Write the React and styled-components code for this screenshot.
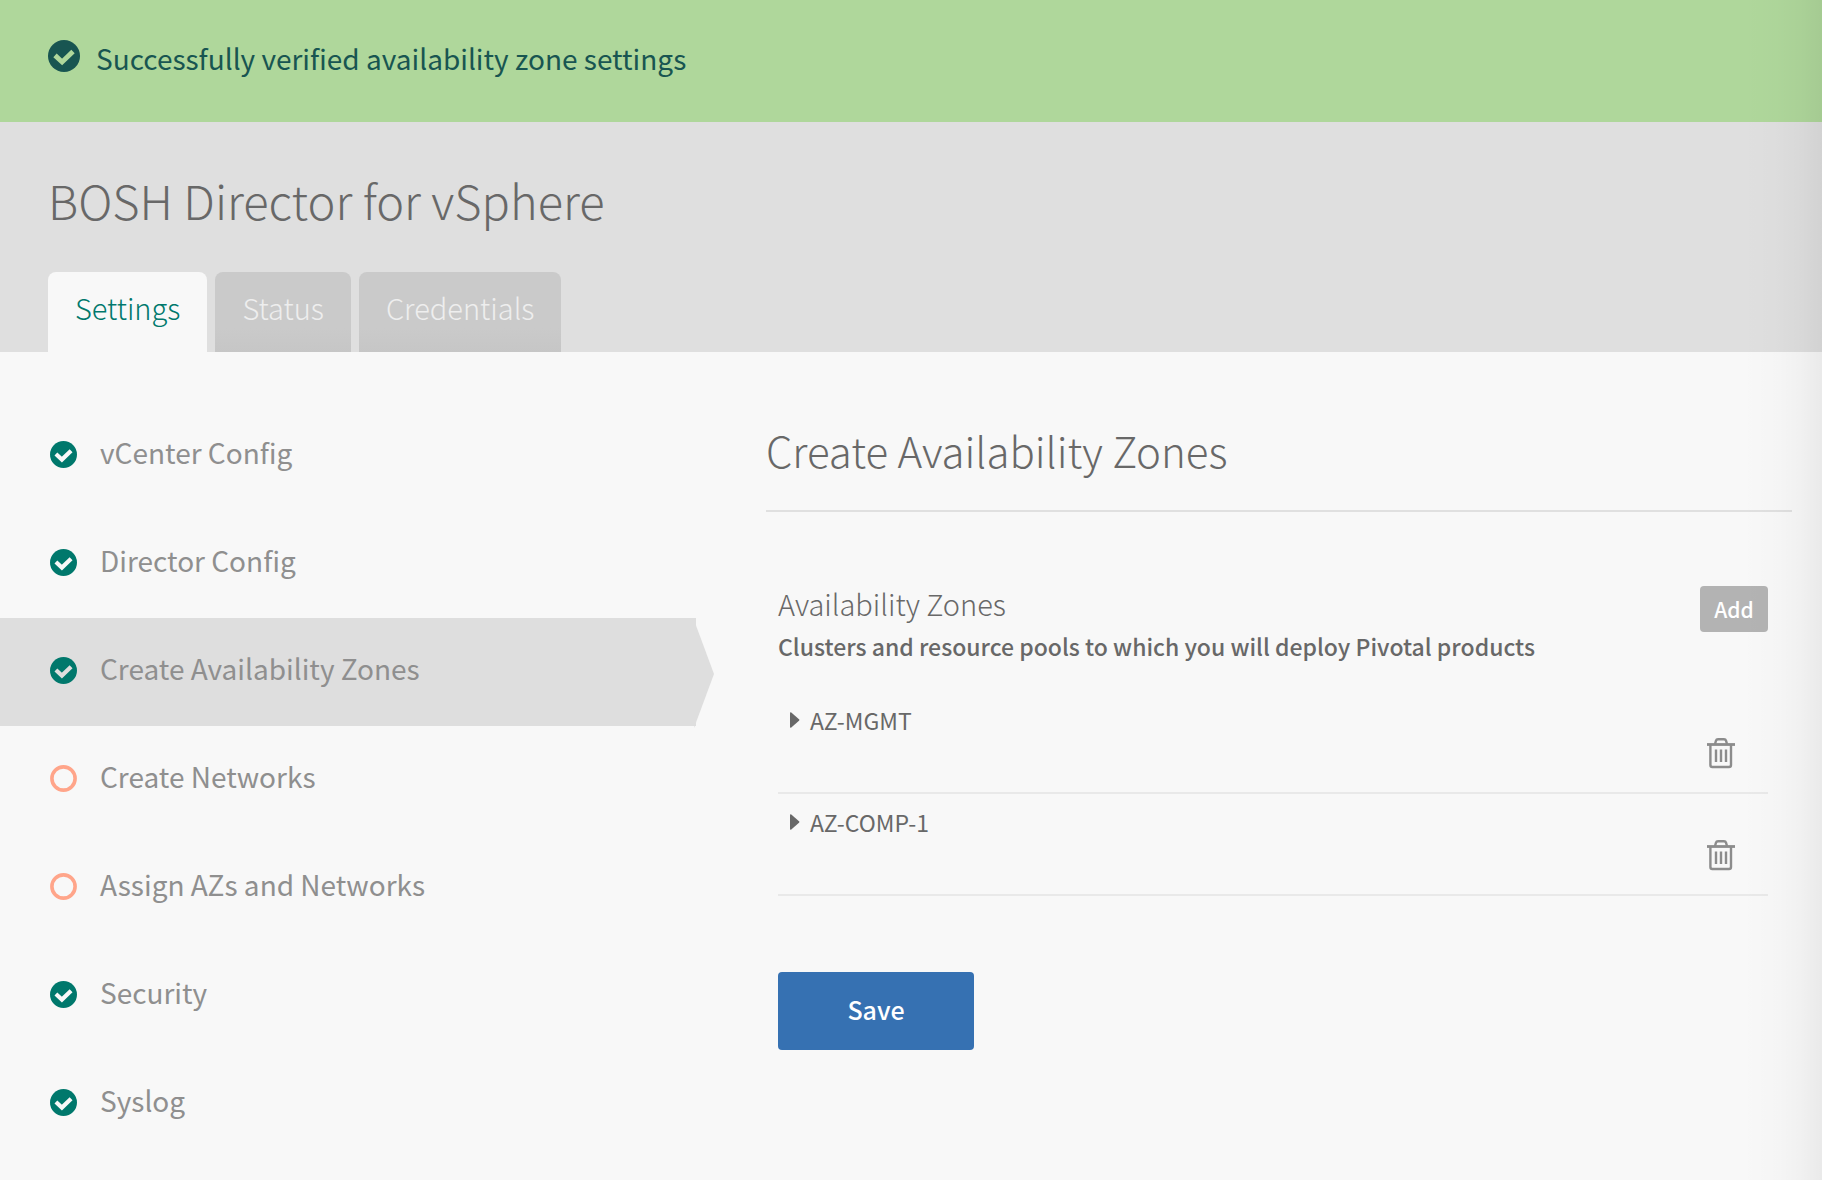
import React, { useState } from "react";
import styled, { createGlobalStyle } from "styled-components";

const GlobalStyle = createGlobalStyle`
  *, *::before, *::after { box-sizing: border-box; }
  body {
    margin: 0;
    background: #f8f8f8;
    color: #686868;
    font-family: "Noto Sans CJK SC", "Noto Sans", sans-serif;
  }
  button { font-family: inherit; border: 0; padding: 0; cursor: pointer; }
  h1, h2, h3, p, ul { margin: 0; padding: 0; }
  ul { list-style: none; }
`;

const Page = styled.div`
  position: relative;
  min-height: 100vh;
`;

const EdgeShade = styled.div`
  position: absolute;
  top: 0;
  right: 0;
  bottom: 0;
  width: 80px;
  pointer-events: none;
  background: linear-gradient(
    to right,
    rgba(0, 0, 0, 0) 0%,
    rgba(0, 0, 0, 0.01) 45%,
    rgba(0, 0, 0, 0.03) 75%,
    rgba(0, 0, 0, 0.06) 100%
  );
`;

const Banner = styled.div`
  display: flex;
  align-items: flex-start;
  gap: 16px;
  height: 122px;
  padding: 40px 48px;
  background: #afd79b;
  color: #185551;
`;

const BannerText = styled.p`
  font-size: 28px;
  line-height: 36px;
`;

const Header = styled.header`
  padding: 46px 48px 0;
  background: #dfdfdf;
`;

const Title = styled.h1`
  margin-bottom: 40px;
  font-size: 47px;
  font-weight: 300;
  line-height: 64px;
`;

const Tabs = styled.nav`
  display: flex;
  gap: 8px;
`;

const Tab = styled.a`
  height: 80px;
  padding: 14px 27px;
  border-radius: 8px 8px 0 0;
  background: ${(p) => (p.$active ? "#f8f8f8" : "linear-gradient(#cacaca 70%, #c6c6c6)")};
  color: ${(p) => (p.$active ? "#00786c" : "#eeeeee")};
  font-size: 29px;
  font-weight: 300;
  line-height: 42px;
  text-decoration: none;
`;

const Body = styled.div`
  display: flex;
  gap: 70px;
  padding: 50px 30px 0 0;
`;

const Sidebar = styled.nav`
  flex: 0 0 696px;
`;

const StepLink = styled.a`
  position: relative;
  display: flex;
  align-items: center;
  gap: 23px;
  height: 108px;
  padding: 0 50px 4px;
  background: ${(p) => (p.$active ? "#dedede" : "transparent")};
  color: #8f8f8f;
  font-size: 28px;
  line-height: 40px;
  text-decoration: none;

  &::after {
    content: "";
    display: ${(p) => (p.$active ? "block" : "none")};
    position: absolute;
    top: 2px;
    right: -18px;
    border: solid transparent;
    border-width: 54px 0 54px 20px;
    border-left-color: #dedede;
  }
`;

const StepLabel = styled.span`
  padding-bottom: 4px;
`;

const Main = styled.main`
  flex: 1;
  min-width: 0;
`;

const SectionTitle = styled.h2`
  padding: 18px 0 30px;
  border-bottom: 2px solid #e0e0e0;
  font-size: 42px;
  font-weight: 300;
  line-height: 60px;
`;

const Form = styled.form`
  padding: 74px 24px 0 12px;
`;

const FormHead = styled.div`
  display: flex;
  justify-content: space-between;
  align-items: flex-start;
`;

const FormTitle = styled.h3`
  margin-bottom: 6px;
  font-size: 29px;
  font-weight: 300;
  line-height: 34px;
`;

const FormHint = styled.p`
  font-size: 23px;
  font-weight: 500;
  line-height: 40px;
`;

const AddButton = styled.button`
  width: 68px;
  height: 46px;
  border-radius: 4px;
  background: #b3b3b3;
  color: #ffffff;
  font-size: 21px;
  font-weight: 500;
  line-height: 32px;
`;

const ZoneList = styled.ul`
  padding-top: 26px;
`;

const Zone = styled.li`
  display: flex;
  justify-content: space-between;
  height: 102px;
  padding: 8px 33px 0 12px;
  border-bottom: 2px solid #e9e9e9;
`;

const ZoneToggle = styled.button`
  display: flex;
  align-items: center;
  gap: 10px;
  height: 40px;
  background: none;
  color: #686868;
  font-size: 23px;
  line-height: 40px;
`;

const DeleteButton = styled.button`
  align-self: flex-end;
  height: 32px;
  margin-bottom: 23px;
  background: none;
  color: #8c8c8c;
`;

const SaveButton = styled.button`
  width: 196px;
  height: 78px;
  margin-top: 76px;
  padding-bottom: 4px;
  border-radius: 4px;
  background: #3671b2;
  color: #ffffff;
  font-size: 25px;
  font-weight: 500;
  line-height: 40px;
`;

const Icon = styled.svg`
  display: block;
  flex: none;
`;

const DoneIcon = ({ size, tick }) => (
  <Icon width={size} height={size} viewBox="0 0 32 32" aria-hidden="true">
    <circle cx="16" cy="16" r="16" fill="currentColor" />
    <path d="M7 15.4 L14.1 22 L25 11.5" fill="none" stroke={tick} strokeWidth="4.9" strokeLinejoin="miter" />
  </Icon>
);

const DoneMark = styled.span`
  color: #00786c;
`;

const PendingIcon = () => (
  <Icon width="27" height="27" viewBox="0 0 27 27" aria-hidden="true">
    <circle cx="13.5" cy="13.5" r="11.6" fill="none" stroke="#ffa58a" strokeWidth="3.6" />
  </Icon>
);

const CaretIcon = () => (
  <Icon width="10" height="16" viewBox="0 0 10 16" aria-hidden="true">
    <path d="M0 1.2 Q0 -0.4 1.3 0.6 L9 7.3 Q9.8 8 9 8.7 L1.3 15.4 Q0 16.4 0 14.8 Z" fill="currentColor" />
  </Icon>
);

const TrashIcon = () => (
  <Icon width="28" height="32" viewBox="0 0 28 32" fill="none" stroke="currentColor" strokeWidth="2.4" aria-hidden="true">
    <path d="M0 7.5 H28" strokeWidth="2.8" />
    <path d="M8 7 L9 3.6 Q9.4 2.2 11 2.2 H17 Q18.6 2.2 19 3.6 L20 7" />
    <path d="M3.4 8 V28 Q3.4 30 5.4 30 H22 Q24 30 24 28 V8" />
    <path d="M9 12.5 V25 M14 12.5 V25 M19 12.5 V25" />
  </Icon>
);

const tabs = ["Settings", "Status", "Credentials"];

const steps = [
  { label: "vCenter Config", done: true },
  { label: "Director Config", done: true },
  { label: "Create Availability Zones", done: true },
  { label: "Create Networks", done: false },
  { label: "Assign AZs and Networks", done: false },
  { label: "Security", done: true },
  { label: "Syslog", done: true },
];

export default function App() {
  const [step, setStep] = useState("Create Availability Zones");

  return (
    <Page>
      <GlobalStyle />
      <Banner role="status">
        <DoneIcon size={32} tick="#afd79b" />
        <BannerText>Successfully verified availability zone settings</BannerText>
      </Banner>
      <Header>
        <Title>BOSH Director for vSphere</Title>
        <Tabs aria-label="Director">
          {tabs.map((name, i) => (
            <Tab key={name} href={`#${name.toLowerCase()}`} $active={i === 0}>
              {name}
            </Tab>
          ))}
        </Tabs>
      </Header>
      <Body>
        <Sidebar aria-label="Steps">
          <ul>
            {steps.map(({ label, done }) => {
              const active = label === step;
              return (
                <li key={label}>
                  <StepLink href="#settings" $active={active} onClick={() => setStep(label)}>
                    {done ? (
                      <DoneMark>
                        <DoneIcon size={27} tick={active ? "#dedede" : "#f8f8f8"} />
                      </DoneMark>
                    ) : (
                      <PendingIcon />
                    )}
                    <StepLabel>{label}</StepLabel>
                  </StepLink>
                </li>
              );
            })}
          </ul>
        </Sidebar>
        <Main>
          <SectionTitle>Create Availability Zones</SectionTitle>
          <Form onSubmit={(e) => e.preventDefault()}>
            <FormHead>
              <div>
                <FormTitle>Availability Zones</FormTitle>
                <FormHint>Clusters and resource pools to which you will deploy Pivotal products</FormHint>
              </div>
              <AddButton type="button">Add</AddButton>
            </FormHead>
            <ZoneList>
              {["AZ-MGMT", "AZ-COMP-1"].map((zone) => (
                <Zone key={zone}>
                  <ZoneToggle type="button" aria-expanded="false">
                    <CaretIcon />
                    {zone}
                  </ZoneToggle>
                  <DeleteButton type="button" aria-label={`Delete ${zone}`}>
                    <TrashIcon />
                  </DeleteButton>
                </Zone>
              ))}
            </ZoneList>
            <SaveButton type="submit">Save</SaveButton>
          </Form>
        </Main>
      </Body>
      <EdgeShade />
    </Page>
  );
}
